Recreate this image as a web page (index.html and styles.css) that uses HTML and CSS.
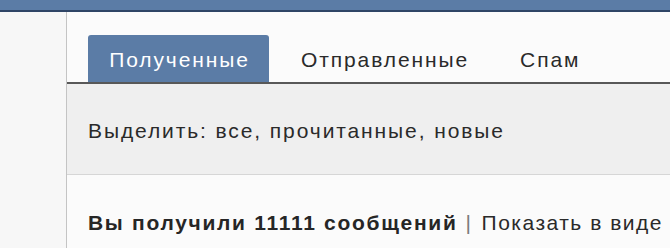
FILE: index.html
```html
<!DOCTYPE html>
<html lang="ru">
<head>
<meta charset="utf-8">
<link rel="stylesheet" href="styles.css">
</head>
<body>
<div class="topbar"></div>
<div class="page">
  <div class="side"></div>
  <div class="main">
    <div class="tabs">
      <div class="tab active">Полученные</div>
      <div class="tab">Отправленные</div>
      <div class="tab">Спам</div>
    </div>
    <div class="filter">Выделить: все, прочитанные, новые</div>
    <div class="summary"><span class="count">Вы получили 11111 сообщений</span><span class="sep">|</span><span class="view">Показать в виде</span></div>
  </div>
</div>
</body>
</html>
```
FILE: styles.css
```css
html, body {
  margin: 0;
  padding: 0;
  height: 100%;
  overflow: hidden;
  background: #f7f7f7;
  font-family: "Liberation Sans", Arial, sans-serif;
  color: #2a2a2a;
}
.topbar {
  height: 10px;
  background: #5b7ca6;
  border-bottom: 2px solid #2f4566;
}
.page {
  display: flex;
  height: 236px;
}
.side {
  width: 66px;
  flex: none;
  background: #f7f7f7;
  border-right: 1px solid #c4c4c4;
}
.main {
  flex: 1;
  background: #fbfbfb;
  min-width: 0;
  white-space: nowrap;
  overflow: hidden;
}
.tabs {
  display: flex;
  align-items: flex-end;
  padding: 23px 0 0 21px;
  border-bottom: 2px solid #585858;
  height: 47px;
}
.tab {
  font-size: 21px;
  letter-spacing: 1.9px;
  color: #2a2a2a;
  height: 47px;
  line-height: 50px;
  padding: 0 19px 0 20px;
  margin-right: 12px;
}
.tab.active {
  background: #5b7ca6;
  color: #ffffff;
  border-radius: 3px 3px 0 0;
  box-sizing: border-box;
  width: 181px;
  text-align: center;
  padding: 0 0 0 2px;
  margin-right: 12px;
}
.filter {
  background: #efefef;
  border-bottom: 1px solid #d6d6d6;
  height: 90px;
  line-height: 94px;
  padding-left: 21px;
  font-size: 21px;
  letter-spacing: 1.9px;
}
.summary {
  padding: 31px 0 0 21px;
  font-size: 21px;
  letter-spacing: 1.5px;
  line-height: 34px;
}
.count {
  font-weight: bold;
  letter-spacing: 1.7px;
  color: #262626;
}
.sep {
  color: #7a7a7a;
  margin: 0 9px 0 8px;
}
```
